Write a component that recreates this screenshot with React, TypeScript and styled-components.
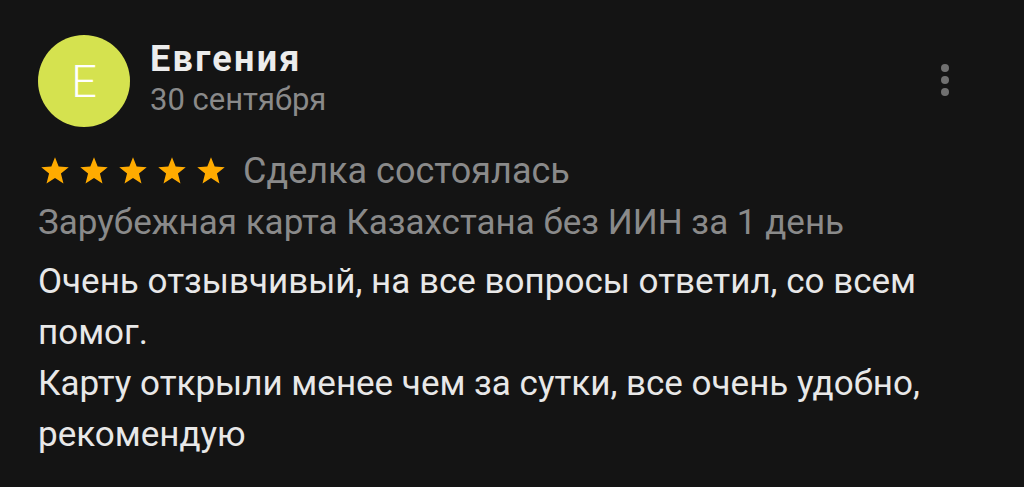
import React from "react";
import styled, { createGlobalStyle } from "styled-components";

const GlobalStyle = createGlobalStyle`
  html, body {
    margin: 0;
    padding: 0;
    background: #141414;
  }
  body {
    font-family: Roboto, "Noto Sans", sans-serif;
    -webkit-font-smoothing: antialiased;
  }
`;

const Review = styled.div`
  width: 1024px;
  height: 487px;
  box-sizing: border-box;
  padding: 35px 38px 0 38px;
  background: #141414;
  color: #e8e8e8;
`;

const Header = styled.div`
  display: flex;
  align-items: center;
  gap: 20px;
`;

const Avatar = styled.div`
  width: 92px;
  height: 92px;
  border-radius: 50%;
  background: #d5e24f;
  color: #ffffff;
  display: flex;
  align-items: center;
  justify-content: center;
  font-size: 45px;
  font-weight: 300;
  flex-shrink: 0;
`;

const Author = styled.div`
  display: flex;
  flex-direction: column;
  flex: 1;
  margin-top: -6px;
`;

const Name = styled.div`
  font-size: 36px;
  font-weight: 700;
  letter-spacing: 2.3px;
  color: #ececec;
  line-height: 44px;
`;

const DateText = styled.div`
  font-size: 31px;
  color: #8a8a8a;
  line-height: 38px;
`;

const Menu = styled.div`
  display: flex;
  flex-direction: column;
  gap: 4px;
  margin-right: 37px;
  margin-top: -2px;
`;

const Dot = styled.span`
  width: 8px;
  height: 8px;
  border-radius: 50%;
  background: #707070;
`;

const RatingRow = styled.div`
  display: flex;
  align-items: center;
  margin-top: 19px;
  gap: 16px;
`;

const Stars = styled.div`
  display: flex;
  gap: 7px;
  padding-left: 1px;
`;

const Muted = styled.div<{ $size?: number }>`
  font-size: ${(p) => p.$size ?? 35}px;
  color: #8a8a8a;
  line-height: 50px;
`;

const Service = styled(Muted)`
  margin-top: 2px;
`;

const Body = styled.div`
  margin-top: 8px;
  font-size: 35px;
  line-height: 51px;
  color: #e8e8e8;
  width: 950px;
`;

const Star = () => (
  <svg width="32" height="32" viewBox="0 0 24 24">
    <path
      fill="#ffab00"
      d="M12 1.6l2.75 7.05 7.55.45-5.85 4.85 1.9 7.35L12 17.25l-6.35 4.05 1.9-7.35L1.7 9.1l7.55-.45z"
    />
  </svg>
);

export default function App() {
  return (
    <>
      <GlobalStyle />
      <Review>
        <Header>
          <Avatar>Е</Avatar>
          <Author>
            <Name>Евгения</Name>
            <DateText>30 сентября</DateText>
          </Author>
          <Menu>
            <Dot />
            <Dot />
            <Dot />
          </Menu>
        </Header>
        <RatingRow>
          <Stars>
            {[0, 1, 2, 3, 4].map((i) => (
              <Star key={i} />
            ))}
          </Stars>
          <Muted $size={36}>Сделка состоялась</Muted>
        </RatingRow>
        <Service>Зарубежная карта Казахстана без ИИН за 1 день</Service>
        <Body>
          Очень отзывчивый, на все вопросы ответил, со всем помог.
          <br />
          Карту открыли менее чем за сутки, все очень удобно, рекомендую
        </Body>
      </Review>
    </>
  );
}
